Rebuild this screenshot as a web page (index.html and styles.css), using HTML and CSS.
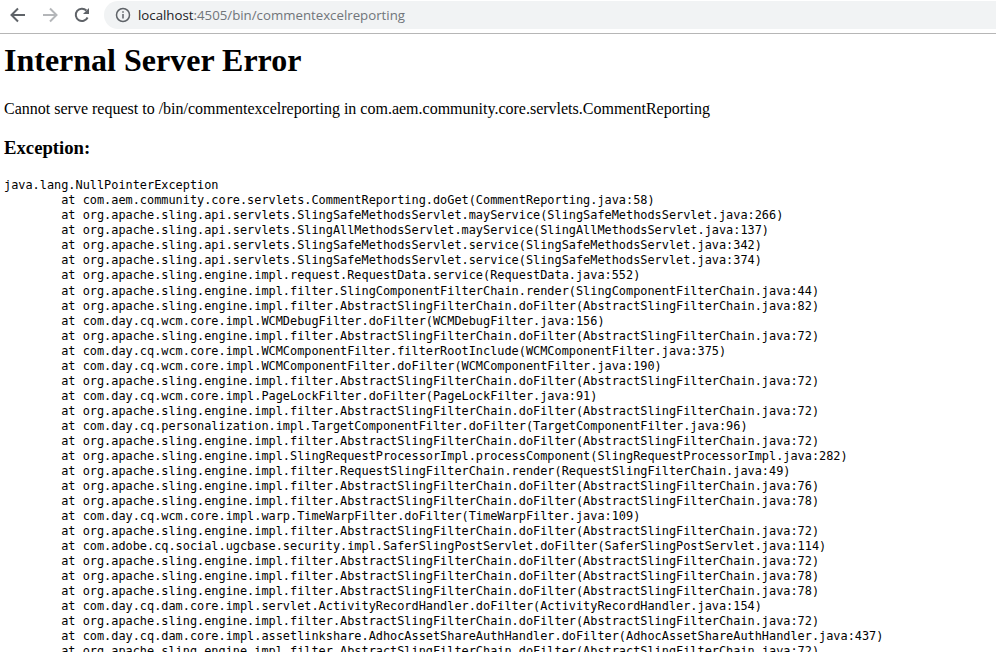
FILE: index.html
```html
<!DOCTYPE html>
<html lang="en">
<head>
<meta charset="utf-8">
<title>Internal Server Error</title>
<link rel="stylesheet" href="styles.css">
</head>
<body>
<header class="toolbar">
  <svg class="nav-icon" width="16" height="16" viewBox="0 0 16 16" fill="none" stroke="#5f6368" stroke-width="2"><path d="M15 8H2M8 1.500 1.500 8 8 14.500"/></svg>
  <svg class="nav-icon" width="16" height="16" viewBox="0 0 16 16" fill="none" stroke="#b4b6b9" stroke-width="2"><path d="M1 8h13M8 1.500 14.500 8 8 14.500"/></svg>
  <svg class="nav-icon" width="16" height="16" viewBox="0 0 16 16" fill="none" stroke="#5f6368" stroke-width="2"><path d="M13.600 10.500A6.200 6.200 0 1 1 12.400 3.500"/><path d="M15 1v6H9z" fill="#5f6368" stroke="none"/></svg>
  <div class="omnibox">
    <svg width="16" height="16" viewBox="0 0 16 16" fill="none" stroke="#5f6368" stroke-width="1.500"><circle cx="8" cy="8" r="6.500"/><path d="M8 7v4.500M8 4.200v1.600"/></svg>
    <span class="url"><span class="host">localhost</span>:4505/bin/commentexcelreporting</span>
  </div>
</header>
<main class="page">
<h1>Internal Server Error</h1>
<p>Cannot serve request to /bin/commentexcelreporting in com.aem.community.core.servlets.CommentReporting</p>
<h3>Exception:</h3>
<pre>java.lang.NullPointerException
	at com.aem.community.core.servlets.CommentReporting.doGet(CommentReporting.java:58)
	at org.apache.sling.api.servlets.SlingSafeMethodsServlet.mayService(SlingSafeMethodsServlet.java:266)
	at org.apache.sling.api.servlets.SlingAllMethodsServlet.mayService(SlingAllMethodsServlet.java:137)
	at org.apache.sling.api.servlets.SlingSafeMethodsServlet.service(SlingSafeMethodsServlet.java:342)
	at org.apache.sling.api.servlets.SlingSafeMethodsServlet.service(SlingSafeMethodsServlet.java:374)
	at org.apache.sling.engine.impl.request.RequestData.service(RequestData.java:552)
	at org.apache.sling.engine.impl.filter.SlingComponentFilterChain.render(SlingComponentFilterChain.java:44)
	at org.apache.sling.engine.impl.filter.AbstractSlingFilterChain.doFilter(AbstractSlingFilterChain.java:82)
	at com.day.cq.wcm.core.impl.WCMDebugFilter.doFilter(WCMDebugFilter.java:156)
	at org.apache.sling.engine.impl.filter.AbstractSlingFilterChain.doFilter(AbstractSlingFilterChain.java:72)
	at com.day.cq.wcm.core.impl.WCMComponentFilter.filterRootInclude(WCMComponentFilter.java:375)
	at com.day.cq.wcm.core.impl.WCMComponentFilter.doFilter(WCMComponentFilter.java:190)
	at org.apache.sling.engine.impl.filter.AbstractSlingFilterChain.doFilter(AbstractSlingFilterChain.java:72)
	at com.day.cq.wcm.core.impl.PageLockFilter.doFilter(PageLockFilter.java:91)
	at org.apache.sling.engine.impl.filter.AbstractSlingFilterChain.doFilter(AbstractSlingFilterChain.java:72)
	at com.day.cq.personalization.impl.TargetComponentFilter.doFilter(TargetComponentFilter.java:96)
	at org.apache.sling.engine.impl.filter.AbstractSlingFilterChain.doFilter(AbstractSlingFilterChain.java:72)
	at org.apache.sling.engine.impl.SlingRequestProcessorImpl.processComponent(SlingRequestProcessorImpl.java:282)
	at org.apache.sling.engine.impl.filter.RequestSlingFilterChain.render(RequestSlingFilterChain.java:49)
	at org.apache.sling.engine.impl.filter.AbstractSlingFilterChain.doFilter(AbstractSlingFilterChain.java:76)
	at org.apache.sling.engine.impl.filter.AbstractSlingFilterChain.doFilter(AbstractSlingFilterChain.java:78)
	at com.day.cq.wcm.core.impl.warp.TimeWarpFilter.doFilter(TimeWarpFilter.java:109)
	at org.apache.sling.engine.impl.filter.AbstractSlingFilterChain.doFilter(AbstractSlingFilterChain.java:72)
	at com.adobe.cq.social.ugcbase.security.impl.SaferSlingPostServlet.doFilter(SaferSlingPostServlet.java:114)
	at org.apache.sling.engine.impl.filter.AbstractSlingFilterChain.doFilter(AbstractSlingFilterChain.java:72)
	at org.apache.sling.engine.impl.filter.AbstractSlingFilterChain.doFilter(AbstractSlingFilterChain.java:78)
	at org.apache.sling.engine.impl.filter.AbstractSlingFilterChain.doFilter(AbstractSlingFilterChain.java:78)
	at com.day.cq.dam.core.impl.servlet.ActivityRecordHandler.doFilter(ActivityRecordHandler.java:154)
	at org.apache.sling.engine.impl.filter.AbstractSlingFilterChain.doFilter(AbstractSlingFilterChain.java:72)
	at com.day.cq.dam.core.impl.assetlinkshare.AdhocAssetShareAuthHandler.doFilter(AdhocAssetShareAuthHandler.java:437)
	at org.apache.sling.engine.impl.filter.AbstractSlingFilterChain.doFilter(AbstractSlingFilterChain.java:72)</pre>
</main>
</body>
</html>
```
FILE: styles.css
```css
html, body {
  margin: 0;
  height: 652px;
  overflow: hidden;
  background: #fff;
}
.toolbar {
  display: flex;
  align-items: center;
  gap: 16px;
  height: 28px;
  padding: 1px 0 4px 10px;
  border-bottom: 1px solid #b6b6b6;
  box-sizing: content-box;
}
.nav-icon { flex: none; }
.omnibox {
  display: flex;
  align-items: center;
  gap: 7px;
  flex: 1;
  height: 28px;
  margin-left: -2px;
  padding-left: 11px;
  background: #f1f3f4;
  border-radius: 14px 0 0 14px;
}
.url {
  font: 13.25px "Open Sans", "Noto Sans", sans-serif;
  color: #70757a;
}
.host { color: #202124; }
.page {
  padding: 0 4px;
  color: #000;
  font-family: "Liberation Serif", serif;
  font-size: 16px;
}
h1 {
  margin: 8px 0 0;
  font-size: 32px;
  line-height: 37px;
  font-weight: bold;
}
p {
  margin: 21px 0 0;
  line-height: 18px;
}
h3 {
  margin: 19px 0 0;
  font-size: 18.72px;
  line-height: 21px;
}
pre {
  margin: 20.3px 0 0;
  font-family: "DejaVu Sans Mono", monospace;
  font-size: 11.89px;
  line-height: 15.03px;
  tab-size: 8;
}
```
